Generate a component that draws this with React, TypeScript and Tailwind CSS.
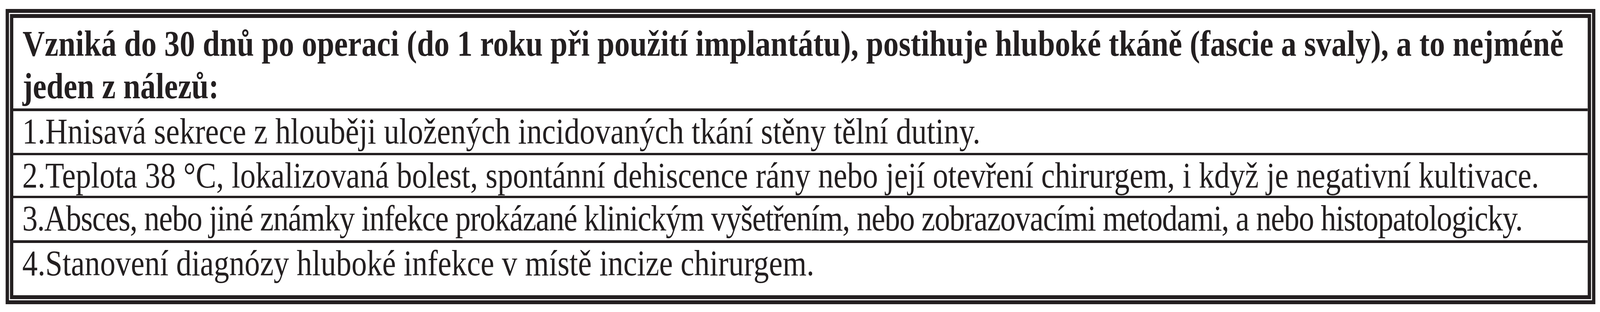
import { useEffect, useState } from 'react';

const PAGE_W = 4817;

const rows = [
  { text: '1.Hnisavá sekrece z hlouběji uložených incidovaných tkání stěny tělní dutiny.', cls: 'h-[113px] border-b-[6px]' },
  { text: '2.Teplota 38 °C, lokalizovaná bolest, spontánní dehiscence rány nebo její otevření chirurgem, i když je negativní kultivace.', cls: 'h-[110px] border-b-[6px]' },
  { text: '3.Absces, nebo jiné známky infekce prokázané klinickým vyšetřením, nebo zobrazovacími metodami, a nebo histopatologicky.', cls: 'h-[115px] border-b-[7px] tracking-[-1.65px]' },
  { text: '4.Stanovení diagnózy hluboké infekce v místě incize chirurgem.', cls: 'h-[134px]' },
];

export default function App() {
  // the table is drawn at 4817px; squeeze it sideways if the window is narrower
  const [sx, setSx] = useState(() => Math.min(1, window.innerWidth / PAGE_W));

  useEffect(() => {
    const fit = () => setSx(Math.min(1, window.innerWidth / PAGE_W));
    fit();
    window.addEventListener('resize', fit);
    return () => window.removeEventListener('resize', fit);
  }, []);

  return (
    <div className="h-[800px] w-full overflow-hidden bg-white">
      <div
        className="w-[4817px] origin-top-left pl-[17px] pr-[14px] pt-[23px] font-['Liberation_Serif','Times_New_Roman',serif] text-[#231f20]"
        style={{ transform: `scaleX(${sx})` }}
      >
        {/* double frame */}
        <div className="border-[10px] border-[#231f20] p-[3px]">
          <div className="border-[10px] border-[#231f20]">
            <div className="h-[239px] whitespace-nowrap border-b-[7px] border-[#231f20] pl-[28px] pt-[12px] text-[92.5px] font-bold leading-[109px]">
              Vzniká do 30 dnů po operaci (do 1 roku při použití implantátu), postihuje hluboké tkáně (fascie a svaly), a to nejméně
              <br />
              jeden z nálezů:
            </div>
            {rows.map((r) => (
              <div key={r.text} className={`${r.cls} whitespace-nowrap border-[#231f20] pl-[27px] text-[92.7px] leading-[104px]`}>
                {r.text}
              </div>
            ))}
          </div>
        </div>
      </div>
    </div>
  );
}
